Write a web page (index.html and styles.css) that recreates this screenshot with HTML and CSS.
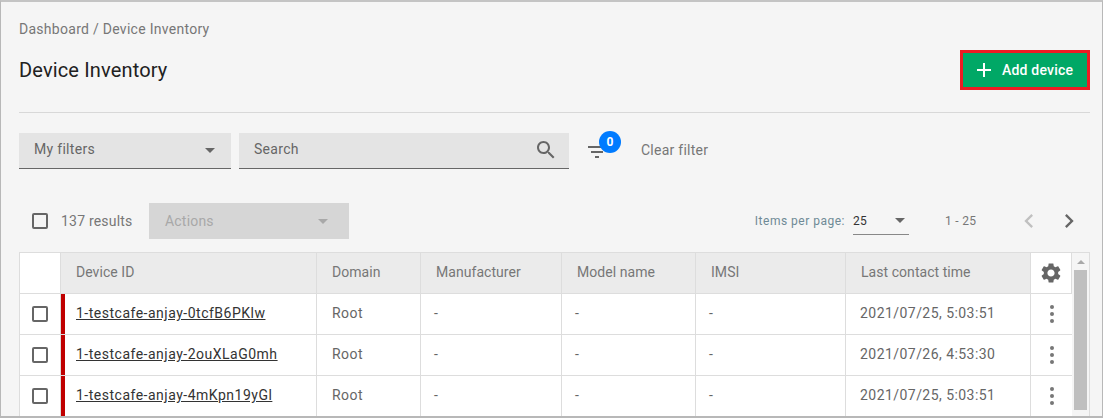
FILE: index.html
```html
<!DOCTYPE html>
<html lang="en">

<head>
  <meta charset="UTF-8">
  <title>Device Inventory</title>
  <link rel="stylesheet" href="styles.css">
</head>

<body>
  <div class="frame">
    <div class="breadcrumb">Dashboard / Device Inventory</div>

    <div class="page-head">
      <h1>Device Inventory</h1>
      <button class="add-btn">
        <svg width="24" height="24" viewBox="0 0 24 24"><path d="M19 13h-6v6h-2v-6H5v-2h6V5h2v6h6v2z"/></svg>
        Add device
      </button>
    </div>

    <div class="filters">
      <div class="field field-filters">
        <span>My filters</span>
        <i class="caret"></i>
      </div>
      <div class="field field-search">
        <span>Search</span>
        <svg width="24" height="24" viewBox="0 0 24 24"><path d="M15.5 14h-.79l-.28-.27C15.41 12.59 16 11.11 16 9.5 16 5.91 13.09 3 9.5 3S3 5.91 3 9.5 5.91 16 9.5 16c1.61 0 3.09-.59 4.23-1.57l.27.28v.79l5 4.99L20.49 19l-4.99-5zm-6 0C7.01 14 5 11.99 5 9.5S7.01 5 9.5 5 14 7.01 14 9.5 11.99 14 9.5 14z"/></svg>
      </div>
      <div class="filter-icon">
        <svg width="24" height="24" viewBox="0 0 24 24"><path d="M10 18h4v-2h-4v2zM3 6v2h18V6H3zm3 7h12v-2H6v2z"/></svg>
        <span class="badge">0</span>
      </div>
      <span class="clear">Clear filter</span>
    </div>

    <div class="toolbar">
      <i class="check"></i>
      <span class="results">137 results</span>
      <div class="actions">
        <span>Actions</span>
        <i class="caret"></i>
      </div>
      <div class="paging">
        <span class="per-page">Items per page:</span>
        <div class="per-select">
          <span>25</span>
          <i class="caret"></i>
        </div>
        <span class="range">1 - 25</span>
        <svg class="nav-off" width="28" height="28" viewBox="0 0 24 24"><path d="M15.41 7.41 14 6l-6 6 6 6 1.41-1.41L10.83 12z"/></svg>
        <svg class="nav-on" width="28" height="28" viewBox="0 0 24 24"><path d="M10 6 8.59 7.41 13.17 12l-4.58 4.59L10 18l6-6z"/></svg>
      </div>
    </div>

    <div class="table-wrap">
      <table class="devices">
        <colgroup>
          <col class="c-check">
          <col class="c-id">
          <col class="c-domain">
          <col class="c-man">
          <col class="c-model">
          <col class="c-imsi">
          <col class="c-time">
          <col class="c-menu">
        </colgroup>
        <thead>
          <tr>
            <th class="blank"></th>
            <th>Device ID</th>
            <th>Domain</th>
            <th>Manufacturer</th>
            <th>Model name</th>
            <th>IMSI</th>
            <th>Last contact time</th>
            <th class="blank gear">
              <svg width="24" height="24" viewBox="0 0 24 24"><path d="M19.14 12.94c.04-.3.06-.61.06-.94 0-.32-.02-.64-.07-.94l2.03-1.58c.18-.14.23-.41.12-.61l-1.92-3.32c-.12-.22-.37-.29-.59-.22l-2.39.96c-.5-.38-1.03-.7-1.62-.94l-.36-2.54c-.04-.24-.24-.41-.48-.41h-3.84c-.24 0-.43.17-.47.41l-.36 2.54c-.59.24-1.13.57-1.62.94l-2.39-.96c-.22-.08-.47 0-.59.22L2.74 8.87c-.12.21-.08.47.12.61l2.03 1.58c-.05.3-.09.63-.09.94s.02.64.07.94l-2.03 1.58c-.18.14-.23.41-.12.61l1.92 3.32c.12.22.37.29.59.22l2.39-.96c.5.38 1.03.7 1.62.94l.36 2.54c.05.24.24.41.48.41h3.84c.24 0 .44-.17.47-.41l.36-2.54c.59-.24 1.13-.56 1.62-.94l2.39.96c.22.08.47 0 .59-.22l1.92-3.32c.12-.22.07-.47-.12-.61l-2.01-1.58zM12 15.6c-1.98 0-3.6-1.62-3.6-3.6s1.62-3.6 3.6-3.6 3.6 1.62 3.6 3.6-1.62 3.6-3.6 3.6z"/></svg>
            </th>
          </tr>
        </thead>
        <tbody>
          <tr>
            <td class="cell-check"><i class="check"></i></td>
            <td class="cell-id"><a href="#">1-testcafe-anjay-0tcfB6PKlw</a></td>
            <td>Root</td>
            <td class="cell-dash">-</td>
            <td class="cell-dash">-</td>
            <td class="cell-dash">-</td>
            <td class="cell-time">2021/07/25, 5:03:51</td>
            <td class="cell-menu"><span class="dots"><b></b><b></b><b></b></span></td>
          </tr>
          <tr>
            <td class="cell-check"><i class="check"></i></td>
            <td class="cell-id"><a href="#">1-testcafe-anjay-2ouXLaG0mh</a></td>
            <td>Root</td>
            <td class="cell-dash">-</td>
            <td class="cell-dash">-</td>
            <td class="cell-dash">-</td>
            <td class="cell-time">2021/07/26, 4:53:30</td>
            <td class="cell-menu"><span class="dots"><b></b><b></b><b></b></span></td>
          </tr>
          <tr>
            <td class="cell-check"><i class="check"></i></td>
            <td class="cell-id"><a href="#">1-testcafe-anjay-4mKpn19yGl</a></td>
            <td>Root</td>
            <td class="cell-dash">-</td>
            <td class="cell-dash">-</td>
            <td class="cell-dash">-</td>
            <td class="cell-time">2021/07/25, 5:03:51</td>
            <td class="cell-menu"><span class="dots"><b></b><b></b><b></b></span></td>
          </tr>
        </tbody>
      </table>
      <div class="scrollbar">
        <i class="scroll-up"></i>
        <div class="scroll-thumb"></div>
      </div>
    </div>
  </div>
</body>

</html>
```

FILE: styles.css
```css
html,
body {
  margin: 0;
  height: 418px;
  overflow: hidden;
}

body {
  font-family: Roboto, "Liberation Sans", sans-serif;
  font-size: 14px;
  color: #666;
}

.frame {
  box-sizing: border-box;
  height: 418px;
  padding: 19px 12px 0 18px;
  overflow: hidden;
  background: #f5f5f5;
  border: 1px solid #b8b8b8;
  border-top: 2px solid #c4c4c4;
  border-bottom: 2px solid #b8b8b8;
}

.breadcrumb {
  height: 16px;
  line-height: 16px;
  letter-spacing: 0.28px;
  color: #777;
}

.page-head {
  display: flex;
  justify-content: space-between;
  align-items: center;
  height: 40px;
  margin-top: 13px;
  padding-bottom: 22px;
  border-bottom: 1px solid #d8d8d8;
}

h1 {
  margin: 0;
  font-size: 20px;
  font-weight: 400;
  letter-spacing: 0.15px;
  color: #212121;
}

.add-btn {
  display: flex;
  align-items: center;
  gap: 6px;
  box-sizing: border-box;
  width: 130px;
  height: 40px;
  margin: 0;
  padding: 0 0 0 9px;
  border: 3px solid #ed1c24;
  background: #00a866;
  color: #fff;
  font-family: inherit;
  font-size: 14px;
  font-weight: 500;
  letter-spacing: 0.2px;
}

.add-btn svg {
  fill: #fff;
}

.filters {
  display: flex;
  align-items: center;
  margin-top: 20px;
  height: 36px;
}

.field {
  display: flex;
  justify-content: space-between;
  align-items: center;
  box-sizing: border-box;
  height: 36px;
  background: #e4e4e4;
  border-bottom: 1px solid #666;
}

.field span {
  margin-bottom: 3px;
  letter-spacing: 0.3px;
}

.field-filters {
  width: 212px;
  margin-right: 8px;
  padding: 0 16px 0 15px;
}

.field-search {
  width: 330px;
  padding: 0 11px 0 15px;
}

.field-search svg {
  margin-bottom: 2px;
  fill: #666;
}

.caret {
  display: block;
  width: 0;
  height: 0;
  border-left: 5px solid transparent;
  border-right: 5px solid transparent;
  border-top: 5px solid #666;
}

.filter-icon {
  position: relative;
  width: 24px;
  height: 24px;
  margin-left: 16px;
  margin-top: 1px;
}

.filter-icon svg {
  display: block;
  fill: #666;
}

.badge {
  position: absolute;
  top: -9px;
  left: 14px;
  width: 22px;
  height: 22px;
  border-radius: 50%;
  background: #007bff;
  color: #fff;
  font-size: 12px;
  font-weight: 700;
  line-height: 22px;
  text-align: center;
}

.clear {
  margin-left: 32px;
  margin-bottom: 2px;
  letter-spacing: 0.25px;
  color: #777;
}

.toolbar {
  display: flex;
  align-items: center;
  height: 36px;
  margin-top: 34px;
}

.check {
  display: block;
  box-sizing: border-box;
  width: 16px;
  height: 16px;
  border: 2px solid #666;
  border-radius: 2px;
}

.toolbar > .check {
  margin-left: 13px;
}

.results {
  width: 72px;
  margin-left: 13px;
  letter-spacing: 0.2px;
  color: #777;
}

.actions {
  display: flex;
  justify-content: space-between;
  align-items: center;
  box-sizing: border-box;
  width: 200px;
  height: 36px;
  margin-left: 16px;
  padding: 0 21px 0 16px;
  background: #d6d6d6;
  color: #a8a8a8;
  letter-spacing: 0.2px;
}

.actions .caret {
  border-top-color: #a8a8a8;
}

.paging {
  display: flex;
  align-items: center;
  margin-left: auto;
  margin-right: 7px;
}

.per-page {
  font-size: 12px;
  letter-spacing: 0.5px;
  color: #6f8a96;
}

.per-select {
  display: flex;
  justify-content: space-between;
  align-items: center;
  box-sizing: border-box;
  width: 56px;
  height: 28px;
  margin-left: 8px;
  padding-right: 4px;
  border-bottom: 1px solid #888;
  font-size: 12px;
  letter-spacing: 0.3px;
  color: #333;
}

.range {
  width: 32px;
  margin-left: 36px;
  margin-right: 38px;
  font-size: 12px;
  letter-spacing: 0.3px;
  color: #777;
}

.nav-off {
  fill: #c0c0c0;
}

.nav-on {
  fill: #666;
  margin-left: 12px;
}

.table-wrap {
  display: flex;
  width: 1069px;
  margin-top: 13px;
  border: 1px solid #ddd;
  background: #fff;
}

.devices {
  width: 1052px;
  table-layout: fixed;
  border-collapse: separate;
  border-spacing: 0;
}

.c-check { width: 41px; }
.c-id { width: 256px; }
.c-domain { width: 104px; }
.c-man { width: 141px; }
.c-model { width: 134px; }
.c-imsi { width: 150px; }
.c-time { width: 185px; }
.c-menu { width: 41px; }

.devices th,
.devices td {
  box-sizing: border-box;
  height: 41px;
  padding: 0 0 2px 15px;
  border-right: 1px solid #ddd;
  border-bottom: 1px solid #ddd;
  text-align: left;
  font-weight: 400;
  white-space: nowrap;
}

.devices th {
  background: #ebebeb;
  color: #777;
  letter-spacing: 0.05px;
}

.devices td {
  color: #666;
  letter-spacing: 0.45px;
}

.devices .cell-dash {
  padding-left: 13px;
}

.devices .cell-time {
  padding-left: 14px;
}

.devices .blank {
  background: #fff;
}

.devices .gear {
  padding: 0;
  text-align: center;
}

.gear svg {
  display: block;
  margin: 0 auto;
  fill: #666;
}

.devices .cell-check {
  padding: 0 0 0 12px;
}

.devices .cell-id {
  box-shadow: inset 4px 0 0 #c00000;
}

.cell-id a {
  color: #333;
  letter-spacing: 0.5px;
}

.devices .cell-menu {
  padding: 0;
  border-right: 0;
}

.dots {
  display: flex;
  flex-direction: column;
  align-items: center;
  gap: 3px;
}

.dots b {
  width: 4px;
  height: 4px;
  border-radius: 50%;
  background: #777;
}

.scrollbar {
  display: flex;
  flex-direction: column;
  align-items: center;
  flex: 1;
  background: #f5f5f5;
}

.scroll-up {
  width: 0;
  height: 0;
  margin: 7px 0 6px;
  border-left: 4px solid transparent;
  border-right: 4px solid transparent;
  border-bottom: 4px solid #a8a8a8;
}

.scroll-thumb {
  width: 13px;
  height: 140px;
  background: #bfbfbf;
}
```
